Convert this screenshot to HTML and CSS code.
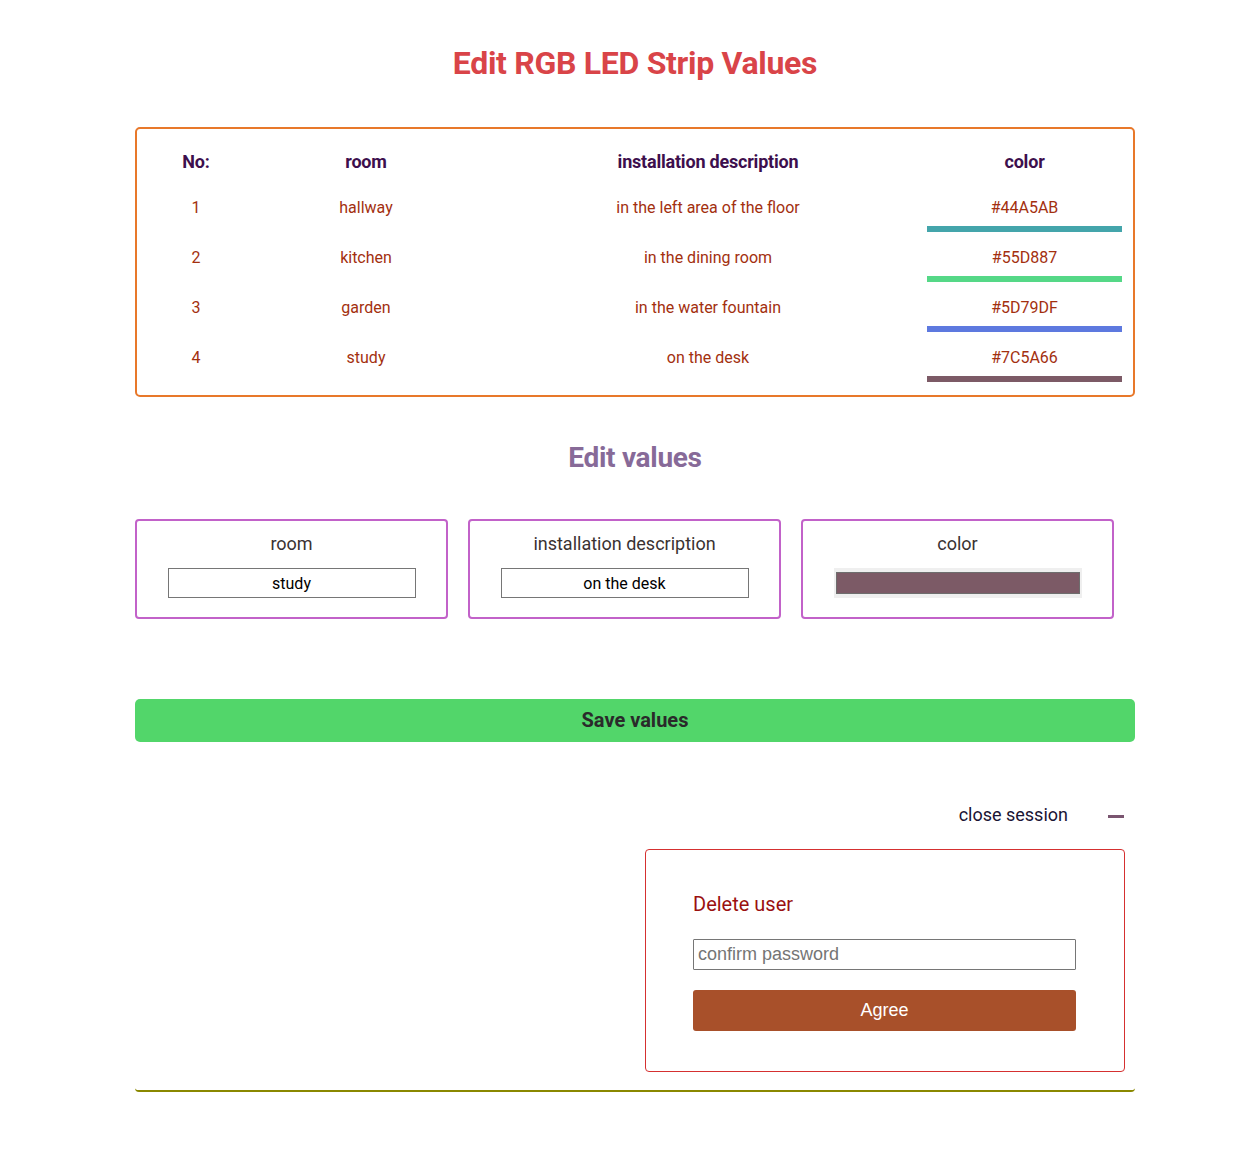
FILE: index.html
```html
<!DOCTYPE html>
<html lang="en">
<head>
<meta charset="utf-8">
<title>Edit RGB LED Strip Values</title>
<link rel="stylesheet" href="styles.css">
</head>
<body>
<main class="page">
  <h1 class="title">Edit RGB LED Strip Values</h1>

  <section class="strips">
    <div class="grid head">
      <div>No:</div><div>room</div><div>installation description</div><div>color</div>
    </div>
    <div class="grid row">
      <div>1</div><div>hallway</div><div>in the left area of the floor</div>
      <div class="colorcell"><span>#44A5AB</span><i class="bar" style="background:#44A5AB"></i></div>
    </div>
    <div class="grid row">
      <div>2</div><div>kitchen</div><div>in the dining room</div>
      <div class="colorcell"><span>#55D887</span><i class="bar" style="background:#55D887"></i></div>
    </div>
    <div class="grid row">
      <div>3</div><div>garden</div><div>in the water fountain</div>
      <div class="colorcell"><span>#5D79DF</span><i class="bar" style="background:#5D79DF"></i></div>
    </div>
    <div class="grid row">
      <div>4</div><div>study</div><div>on the desk</div>
      <div class="colorcell"><span>#7C5A66</span><i class="bar" style="background:#7C5A66"></i></div>
    </div>
  </section>

  <h2 class="subtitle">Edit values</h2>

  <section class="cards">
    <div class="card">
      <label class="card-label">room</label>
      <input class="card-input" type="text" value="study">
    </div>
    <div class="card">
      <label class="card-label">installation description</label>
      <input class="card-input" type="text" value="on the desk">
    </div>
    <div class="card">
      <label class="card-label">color</label>
      <div class="color-input"><div class="swatch" style="background:#7C5A66"></div></div>
    </div>
  </section>

  <button class="save">Save values</button>

  <section class="session">
    <div class="session-bar">
      <span class="close">close session</span>
      <span class="minus"></span>
    </div>
    <div class="delete-box">
      <div class="delete-title">Delete user</div>
      <input class="pw" type="password" placeholder="confirm password">
      <button class="agree">Agree</button>
    </div>
  </section>
</main>
</body>
</html>
```

FILE: styles.css
```css
* { box-sizing: border-box; }
html, body { margin: 0; padding: 0; background: #fff; }
body {
  font-family: Roboto, "Liberation Sans", sans-serif;
  padding-left: 16px;
}

.page {
  width: 1000px;
  margin: 0 auto;
  padding: 44px 0 80px;
  display: flex;
  flex-direction: column;
}

.title {
  margin: 0;
  text-align: center;
  font-size: 32px;
  line-height: 38px;
  font-weight: 700;
  color: #d94448;
  letter-spacing: -0.3px;
}

.strips {
  margin-top: 45px;
  border: 2px solid #e8782a;
  border-radius: 5px;
  padding: 0 11px 6px 12px;
}

.grid {
  display: grid;
  grid-template-columns: 94px 246px 438px 195px;
  text-align: center;
}

.head {
  padding: 22px 0 16px;
  font-size: 18px;
  line-height: 22px;
  font-weight: 700;
  color: #3d0f4d;
  letter-spacing: -0.2px;
}

.row {
  height: 50px;
  padding-top: 9px;
  font-size: 16px;
  line-height: 20px;
  color: #a3300f;
}

.colorcell { display: flex; flex-direction: column; }
.bar { display: block; height: 6px; margin-top: 8px; }

.subtitle {
  margin: 44px 0 0;
  text-align: center;
  font-size: 28px;
  line-height: 34px;
  font-weight: 700;
  color: #876a98;
  letter-spacing: -0.3px;
}

.cards {
  margin-top: 44px;
  display: flex;
  gap: 20px;
}

.card {
  width: 313px;
  height: 100px;
  border: 2px solid #c262c9;
  border-radius: 4px;
  display: flex;
  flex-direction: column;
  align-items: center;
  padding-top: 12px;
}

.card-label {
  font-size: 18px;
  line-height: 22px;
  color: #3a3232;
}

.card-input {
  margin-top: 13px;
  width: 248px;
  height: 30px;
  border: 1px solid #767676;
  border-radius: 0;
  padding: 0 2px;
  text-align: center;
  font-family: Roboto, sans-serif;
  font-size: 16px;
  color: #000;
  background: #fff;
}

.color-input {
  margin-top: 13px;
  width: 248px;
  height: 30px;
  background: #efefef;
  padding: 4px 2px;
}
.swatch {
  height: 22px;
  border: 1px solid #6e6e6e;
}

.save {
  margin-top: 80px;
  height: 43px;
  width: 100%;
  border: none;
  border-radius: 5px;
  background: #52d66a;
  font-family: Roboto, sans-serif;
  font-size: 20px;
  font-weight: 700;
  color: #2a2a2a;
  padding: 0 0 2px;
}

.session {
  margin-top: 51px;
  border-bottom: 2px solid #8a8800;
  border-radius: 0 0 4px 4px;
  padding-bottom: 18px;
  display: flex;
  flex-direction: column;
  align-items: flex-end;
}

.session-bar {
  display: flex;
  align-items: center;
  height: 44px;
  padding-right: 11px;
}

.close {
  font-size: 18px;
  line-height: 22px;
  color: #1a1434;
}

.minus {
  width: 16px;
  height: 3px;
  background: #7a5570;
  margin-left: 40px;
  margin-top: 2px;
}

.delete-box {
  margin-top: 12px;
  margin-right: 10px;
  width: 480px;
  height: 223px;
  border: 1px solid #d53030;
  border-radius: 4px;
  padding: 41px 48px 0 47px;
  display: flex;
  flex-direction: column;
}

.delete-title {
  font-size: 20px;
  line-height: 26px;
  color: #9a1010;
}

.pw {
  margin-top: 22px;
  width: 383px;
  height: 31px;
  border: 1px solid #767676;
  border-radius: 1px;
  padding: 0 4px;
  font-family: "Liberation Sans", Arial, sans-serif;
  font-size: 18px;
  color: #333;
}
.pw::placeholder { color: #757575; }

.agree {
  margin-top: 20px;
  width: 383px;
  height: 41px;
  border: none;
  border-radius: 3px;
  background: #a8502a;
  color: #fff;
  font-family: "Liberation Sans", Arial, sans-serif;
  font-size: 18px;
  padding: 0;
}
```
